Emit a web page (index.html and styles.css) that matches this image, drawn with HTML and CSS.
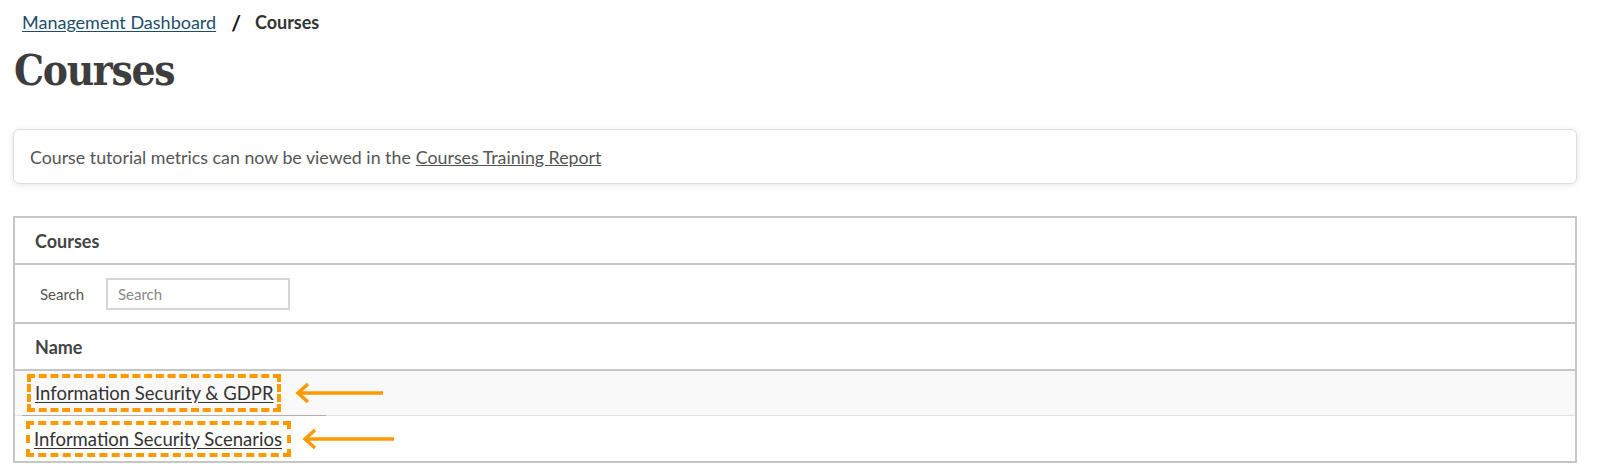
FILE: index.html
```html
<!DOCTYPE html>
<html>
<head>
<meta charset="utf-8">
<link rel="stylesheet" href="styles.css">
</head>
<body>
<div class="page">
  <nav class="crumbs">
    <a href="#" class="crumb-link">Management Dashboard</a>
    <span class="sep">/</span>
    <span class="current">Courses</span>
  </nav>
  <h1 class="title">Courses</h1>
  <div class="notice">Course tutorial metrics can now be viewed in the <a href="#" class="notice-link">Courses Training Report</a></div>
  <div class="panel">
    <div class="panel-head">Courses</div>
    <div class="search-row">
      <label class="search-label">Search</label>
      <input class="search-input" type="text" placeholder="Search">
    </div>
    <div class="col-head">Name</div>
    <div class="row row-odd">
      <span class="hl"><a href="#" class="course-link">Information Security &amp; GDPR</a></span>
      <svg class="arrow" width="92" height="24" viewBox="0 0 92 24"><path d="M90 12H5M15 3L5 12L15 21" fill="none" stroke="#ff9900" stroke-width="3.5"/></svg>
      <span class="rowline"></span>
    </div>
    <div class="row">
      <span class="hl hl2"><a href="#" class="course-link">Information Security Scenarios</a></span>
      <svg class="arrow arrow2" width="96" height="24" viewBox="0 0 96 24"><path d="M94 12H5M15 3L5 12L15 21" fill="none" stroke="#ff9900" stroke-width="3.5"/></svg>
    </div>
  </div>
</div>
</body>
</html>
```
FILE: styles.css
```css
html, body { margin: 0; padding: 0; background: #fff; }
body { font-family: Lato, "Open Sans", sans-serif; color: #333; }
.page { padding: 10px 27px 0 13px; }
.crumbs { display: flex; align-items: center; font-size: 18px; height: 24px; padding-left: 9px; }
.crumb-link { color: #1c4e6b; text-decoration: underline; text-underline-offset: 2px; }
.sep { margin: 0 14px 0 15px; color: #111; font-weight: bold; font-size: 21px; }
.current { font-weight: bold; color: #333; font-size: 18px; }
.title { font-family: "DejaVu Serif Condensed", "DejaVu Serif", serif; font-weight: bold; font-size: 42px; color: #3d3d3d; margin: 12px 0 0 1px; line-height: 50px; letter-spacing: -1.3px; }
.notice { margin-top: 33px; border: 1px solid #ddd; border-radius: 6px; box-shadow: 0 1px 6px rgba(0,0,0,0.10); height: 53px; display: flex; align-items: center; padding-left: 16px; font-size: 17.8px; color: #555; }
.notice-link { color: #555; text-decoration: underline; margin-left: 5px; }
.panel { margin-top: 32px; border: 2px solid #c6c6c6; }
.panel-head { height: 45px; display: flex; align-items: center; padding-left: 20px; font-weight: bold; font-size: 18px; color: #444; border-bottom: 2px solid #c6c6c6; }
.search-row { height: 57px; display: flex; align-items: center; padding-left: 25px; border-bottom: 2px solid #c6c6c6; }
.search-label { font-size: 15px; color: #555; width: 66px; }
.search-input { width: 184px; height: 32px; box-sizing: border-box; border: 2px solid #d6d6d6; padding: 0 10px; font-family: Lato, sans-serif; font-size: 15px; color: #555; outline: none; }
.search-input::placeholder { color: #888; }
.col-head { height: 45px; display: flex; align-items: center; padding-left: 20px; font-weight: bold; font-size: 18px; color: #444; border-bottom: 2px solid #c6c6c6; }
.row { position: relative; height: 45px; display: flex; align-items: center; padding-left: 12px; }
.row-odd { background: #f9f9f9; border-bottom: 1px solid #e2e2e2; height: 44px; }
.rowline { position: absolute; left: 7px; bottom: -1px; width: 304px; height: 1px; background: #b0b0b0; }
.hl { display: inline-flex; align-items: center; border: 4px dashed #ff9900; height: 38px; box-sizing: border-box; padding: 0 3px 0 4px; }
.hl2 { height: 36px; padding-right: 5px; margin-left: -1px; }
.course-link { color: #333; font-size: 18.5px; text-decoration: underline; text-underline-offset: 2px; }
.arrow { margin-left: 12px; }
.arrow2 { margin-left: 9px; }
```
